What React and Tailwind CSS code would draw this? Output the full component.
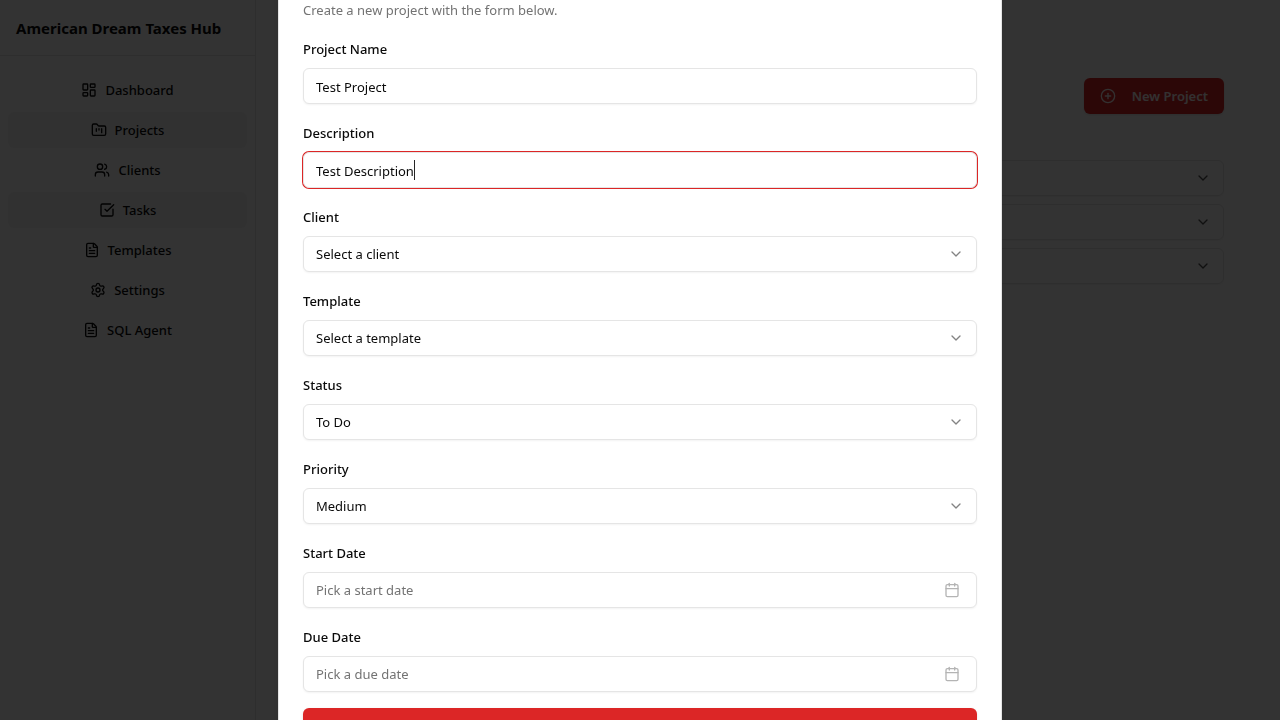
import React from "react";
import {
  LayoutDashboard,
  FolderKanban,
  Users,
  SquareCheckBig,
  FileText,
  Settings,
  CirclePlus,
  ChevronDown,
  Calendar,
} from "lucide-react";

const navItems = [
  { label: "Dashboard", icon: LayoutDashboard },
  { label: "Projects", icon: FolderKanban, active: true },
  { label: "Clients", icon: Users },
  { label: "Tasks", icon: SquareCheckBig, active: true },
  { label: "Templates", icon: FileText },
  { label: "Settings", icon: Settings },
  { label: "SQL Agent", icon: FileText },
];

const fieldBox =
  "h-9 w-full rounded-md border border-neutral-200 bg-white pl-3 text-[13px] leading-5 text-neutral-950 shadow-xs outline-none";

function Sidebar() {
  return (
    <aside className="w-64 shrink-0 border-r border-neutral-200">
      <div className="flex h-14 items-center border-b border-neutral-200 px-4">
        <span className="pt-0.5 text-[15px] font-bold whitespace-nowrap">American Dream Taxes Hub</span>
      </div>
      <nav className="flex flex-col gap-1 px-2 py-4">
        {navItems.map(({ label, icon: Icon, active }) => (
          <a
            key={label}
            href="#"
            className={
              active
                ? "flex h-9 items-center justify-center gap-2 rounded-md bg-neutral-100 text-[13px] font-medium"
                : "flex h-9 items-center justify-center gap-2 rounded-md text-[13px] font-medium"
            }
          >
            <Icon className="size-4" />
            <span className="pt-0.5">{label}</span>
          </a>
        ))}
      </nav>
    </aside>
  );
}

function ProjectsPage() {
  return (
    <main className="flex min-w-0 flex-1 flex-col px-14 pt-[78px]">
      <div className="flex justify-end">
        <button className="flex h-9 items-center gap-4 rounded-md bg-[#dc2626] px-4 text-[13px] font-semibold text-[#fef2f2] shadow-sm">
          <CirclePlus className="size-4" />
          <span className="pt-0.5">New Project</span>
        </button>
      </div>
      <div className="mt-[46px] flex flex-col gap-2">
        {["To Do", "In Progress", "Done"].map((group) => (
          <button
            key={group}
            aria-label={group}
            className="flex h-9 items-center justify-end rounded-md border border-neutral-200 px-3 shadow-xs"
          >
            <ChevronDown className="size-4 opacity-70" />
          </button>
        ))}
      </div>
    </main>
  );
}

function Field({ id, label, children }) {
  return (
    <div className="flex flex-col gap-1.5">
      <label htmlFor={id} className="text-[13px] leading-[26px] font-medium">
        {label}
      </label>
      <div className="relative">{children}</div>
    </div>
  );
}

function SelectField({ id, label, value }) {
  return (
    <Field id={id} label={label}>
      <select id={id} className={`${fieldBox} block appearance-none pr-9`}>
        <option>{value}</option>
      </select>
      <ChevronDown className="pointer-events-none absolute top-2.5 right-[13px] size-4 opacity-50" />
    </Field>
  );
}

function DateField({ id, label, placeholder }) {
  return (
    <Field id={id} label={label}>
      <button id={id} type="button" className={`${fieldBox} flex items-center justify-between pr-4`}>
        <span className="text-neutral-500">{placeholder}</span>
        <Calendar className="size-4 opacity-30" />
      </button>
    </Field>
  );
}

function NewProjectDialog() {
  return (
    <div className="fixed inset-0 flex items-center justify-center overflow-hidden bg-black/80">
      <div
        role="dialog"
        aria-modal="true"
        aria-labelledby="dialog-title"
        className="flex w-full max-w-[724px] shrink-0 flex-col gap-4 border border-neutral-200 bg-white p-6 shadow-lg sm:rounded-lg"
      >
        <div className="flex flex-col gap-1.5">
          <h2 id="dialog-title" className="text-lg leading-none font-semibold">
            New Project
          </h2>
          <p className="text-[13px] leading-5 text-neutral-500">Create a new project with the form below.</p>
        </div>
        <form className="flex flex-col gap-4">
          <Field id="name" label="Project Name">
            <input id="name" type="text" defaultValue="Test Project" className={`${fieldBox} block pt-0.5 pr-3`} />
          </Field>
          <Field id="description" label="Description">
            <input
              id="description"
              type="text"
              defaultValue="Test Description"
              className="block h-9 w-full rounded-md border border-neutral-200 bg-white px-3 pt-0.5 text-[13px] leading-5 text-neutral-950 caret-transparent ring-1 ring-[#dc2626] outline-none"
            />
            <span aria-hidden="true" className="absolute top-2 left-[111px] h-5 w-px bg-neutral-800" />
          </Field>
          <SelectField id="client" label="Client" value="Select a client" />
          <SelectField id="template" label="Template" value="Select a template" />
          <SelectField id="status" label="Status" value="To Do" />
          <SelectField id="priority" label="Priority" value="Medium" />
          <DateField id="start" label="Start Date" placeholder="Pick a start date" />
          <DateField id="due" label="Due Date" placeholder="Pick a due date" />
          <button
            type="submit"
            className="h-9 w-full rounded-md bg-[#dc2626] text-[13px] font-medium text-[#fef2f2] shadow-sm"
          >
            Create Project
          </button>
        </form>
      </div>
    </div>
  );
}

export default function App() {
  return (
    <div className="flex min-h-screen bg-white font-['Noto_Sans','Open_Sans',sans-serif] text-neutral-950">
      <Sidebar />
      <ProjectsPage />
      <NewProjectDialog />
    </div>
  );
}
